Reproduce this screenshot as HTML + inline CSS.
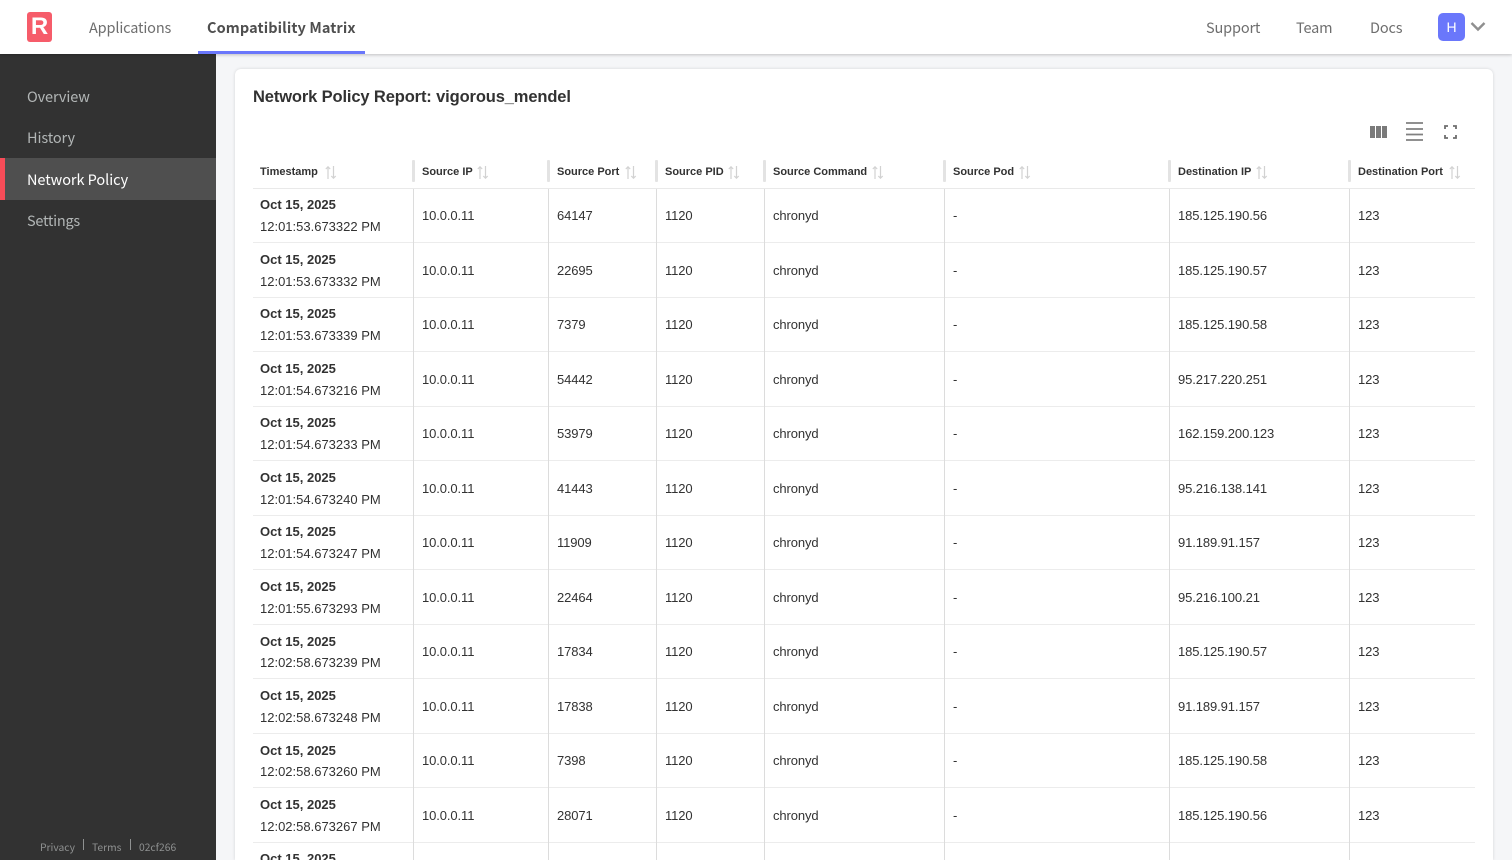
<!DOCTYPE html>
<html lang="en"><head><meta charset="utf-8"><title>Network Policy Report</title>
<style>
*{box-sizing:border-box}
html,body{margin:0;padding:0;width:1512px;height:860px;overflow:hidden;background:#f5f6f8;font-family:"Liberation Sans",sans-serif;color:#323232}
#root{position:relative;width:1512px;height:860px;overflow:hidden}
.abs{position:absolute;white-space:nowrap}
header{position:absolute;left:0;top:0;width:1512px;height:54px;background:#fff;box-shadow:0 1px 3px rgba(0,0,0,.22);z-index:3}
.nav{position:absolute;top:18px;line-height:20px;font-size:14.5px;letter-spacing:-.15px;color:#6e6e6e;font-family:"Noto Sans CJK JP","Liberation Sans",sans-serif;white-space:nowrap}
.logo{position:absolute;left:27px;top:12px;width:25px;height:30px;border-radius:3px;background:#f65c6a;color:#fff;font:bold 24px/30px "Liberation Sans",sans-serif;text-align:center}
.tabline{position:absolute;left:198px;top:51px;width:167px;height:3px;background:#6a77fb}
.avatar{position:absolute;left:1438px;top:13px;width:27px;height:28px;border-radius:5px;background:#6a77fb;color:#fff;font-size:14px;line-height:28px;text-align:center}
aside{position:absolute;left:0;top:54px;width:216px;height:806px;background:#323232;z-index:1}
.side{position:absolute;left:0;width:216px;height:41.5px;padding-left:27px;line-height:41px;font-size:14.5px;letter-spacing:-.1px;color:#b2b6b6;font-family:"Noto Sans CJK JP","Liberation Sans",sans-serif}
.side.on{background:#4f4f4f;color:#fff;border-left:5px solid #f74c58;padding-left:22px;height:42px;line-height:43px;letter-spacing:-.05px}
.foot{position:absolute;top:786px;font-size:10.3px;line-height:14px;color:#8f9191;font-family:"Noto Sans CJK JP","Liberation Sans",sans-serif}
.fsep{position:absolute;top:785px;width:1px;height:11px;background:#8f9191}
.card{position:absolute;left:235px;top:69px;width:1258px;height:791px;background:#fff;border-radius:6px 6px 0 0;box-shadow:0 0 3px rgba(0,0,0,.14)}
h1{position:absolute;left:253px;top:87px;margin:0;font-size:16.5px;letter-spacing:-.13px;line-height:21px;font-weight:bold;color:#323232;white-space:nowrap}
.hd{position:absolute;left:253px;top:155px;width:1222px;height:34px;border-bottom:1px solid #e9e9e9}
.th{position:absolute;top:10px;font-size:11px;line-height:14px;font-weight:bold;color:#323232;white-space:nowrap}
.sort{position:absolute;top:11px}
.grip{position:absolute;top:5px;width:3px;height:22px;background:#e3e3e3;border-radius:1px}
.row{position:absolute;left:253px;width:1222px;height:54.5px;border-bottom:1px solid #ececec;font-size:13px;color:#323232}
.row span{position:absolute;top:.5px;height:53px;line-height:53px;white-space:nowrap;letter-spacing:-.1px}
.row b{position:absolute;left:7px;top:6.5px;line-height:20px;font-size:13px;white-space:nowrap}
.row i{position:absolute;left:7px;top:28.5px;font-style:normal;line-height:20px;white-space:nowrap}
.c1{left:169px}.c2{left:304px}.c3{left:412px}.c4{left:520px}.c5{left:700px}.c6{left:925px}.c7{left:1105px}
.vl{position:absolute;top:189px;width:1px;height:671px;background:#dcdcdc}
</style></head><body><div id="root">
<header>
<div class="logo">R</div>
<div class="nav" style="left:89px">Applications</div>
<div class="nav" style="left:207px;font-weight:700;letter-spacing:.1px;color:#4f4f4f">Compatibility Matrix</div>
<div class="tabline"></div>
<div class="nav" style="left:1206px">Support</div>
<div class="nav" style="left:1296px">Team</div>
<div class="nav" style="left:1370px">Docs</div>
<div class="avatar">H</div>
<svg class="abs" style="left:1470px;top:21px" width="16" height="11" viewBox="0 0 16 11"><path d="M1.5 2 L8 8.5 L14.5 2" fill="none" stroke="#8f8f8f" stroke-width="2.4"/></svg>
</header>
<aside>
<div class="side" style="top:22px">Overview</div>
<div class="side" style="top:63px">History</div>
<div class="side on" style="top:104px">Network Policy</div>
<div class="side" style="top:146px;letter-spacing:-.25px">Settings</div>
<div class="foot" style="left:40px">Privacy</div>
<div class="fsep" style="left:83px"></div>
<div class="foot" style="left:92px">Terms</div>
<div class="fsep" style="left:130px"></div>
<div class="foot" style="left:139px">02cf266</div>
</aside>
<div class="card"></div>
<h1>Network Policy Report: vigorous_mendel</h1>
<svg class="abs" style="left:1370px;top:126px" width="17" height="12" viewBox="0 0 17 12"><path d="M0 0h5v12H0zM6 0h5v12H6zM12 0h5v12h-5z" fill="#7a7a7a"/></svg>
<svg class="abs" style="left:1406px;top:122px" width="17" height="19" viewBox="0 0 17 19"><path d="M0 1h17M0 7h17M0 12.500h17M0 18h17" stroke="#808080" stroke-width="1.700" fill="none"/></svg>
<svg class="abs" style="left:1444px;top:125px" width="13" height="14" viewBox="0 0 13 14"><path d="M1 4V1h3M9 1h3v3M12 10v3H9M4 13H1v-3" stroke="#6e6e6e" stroke-width="1.800" fill="none"/></svg>
<div class="hd">
<div class="th" style="left:7px">Timestamp</div>
<div class="grip" style="left:159px"></div>
<div class="th" style="left:169px">Source IP</div>
<div class="grip" style="left:294px"></div>
<div class="th" style="left:304px">Source Port</div>
<div class="grip" style="left:402px"></div>
<div class="th" style="left:412px">Source PID</div>
<div class="grip" style="left:510px"></div>
<div class="th" style="left:520px">Source Command</div>
<div class="grip" style="left:690px"></div>
<div class="th" style="left:700px">Source Pod</div>
<div class="grip" style="left:915px"></div>
<div class="th" style="left:925px">Destination IP</div>
<div class="grip" style="left:1095px"></div>
<div class="th" style="left:1105px">Destination Port</div>
<svg class="sort" style="left:72px" width="12" height="13" viewBox="0 0 12 13"><path d="M3 13V1M.8 3 3 .8 5.200 3M8.500 0v12M6.300 10l2.200 2.200L10.700 10" stroke="#d2d2d2" stroke-width="1.200" fill="none"/></svg>
<svg class="sort" style="left:224px" width="12" height="13" viewBox="0 0 12 13"><path d="M3 13V1M.8 3 3 .8 5.200 3M8.500 0v12M6.300 10l2.200 2.200L10.700 10" stroke="#d2d2d2" stroke-width="1.200" fill="none"/></svg>
<svg class="sort" style="left:372px" width="12" height="13" viewBox="0 0 12 13"><path d="M3 13V1M.8 3 3 .8 5.200 3M8.500 0v12M6.300 10l2.200 2.200L10.700 10" stroke="#d2d2d2" stroke-width="1.200" fill="none"/></svg>
<svg class="sort" style="left:475px" width="12" height="13" viewBox="0 0 12 13"><path d="M3 13V1M.8 3 3 .8 5.200 3M8.500 0v12M6.300 10l2.200 2.200L10.700 10" stroke="#d2d2d2" stroke-width="1.200" fill="none"/></svg>
<svg class="sort" style="left:619px" width="12" height="13" viewBox="0 0 12 13"><path d="M3 13V1M.8 3 3 .8 5.200 3M8.500 0v12M6.300 10l2.200 2.200L10.700 10" stroke="#d2d2d2" stroke-width="1.200" fill="none"/></svg>
<svg class="sort" style="left:766px" width="12" height="13" viewBox="0 0 12 13"><path d="M3 13V1M.8 3 3 .8 5.200 3M8.500 0v12M6.300 10l2.200 2.200L10.700 10" stroke="#d2d2d2" stroke-width="1.200" fill="none"/></svg>
<svg class="sort" style="left:1003px" width="12" height="13" viewBox="0 0 12 13"><path d="M3 13V1M.8 3 3 .8 5.200 3M8.500 0v12M6.300 10l2.200 2.200L10.700 10" stroke="#d2d2d2" stroke-width="1.200" fill="none"/></svg>
<svg class="sort" style="left:1196px" width="12" height="13" viewBox="0 0 12 13"><path d="M3 13V1M.8 3 3 .8 5.200 3M8.500 0v12M6.300 10l2.200 2.200L10.700 10" stroke="#d2d2d2" stroke-width="1.200" fill="none"/></svg>
</div>
<div class="row" style="top:188.500px"><b>Oct 15, 2025</b><i>12:01:53.673322 PM</i><span class="c1">10.0.0.11</span><span class="c2">64147</span><span class="c3">1120</span><span class="c4">chronyd</span><span class="c5">-</span><span class="c6">185.125.190.56</span><span class="c7">123</span></div>
<div class="row" style="top:243px"><b>Oct 15, 2025</b><i>12:01:53.673332 PM</i><span class="c1">10.0.0.11</span><span class="c2">22695</span><span class="c3">1120</span><span class="c4">chronyd</span><span class="c5">-</span><span class="c6">185.125.190.57</span><span class="c7">123</span></div>
<div class="row" style="top:297.500px"><b>Oct 15, 2025</b><i>12:01:53.673339 PM</i><span class="c1">10.0.0.11</span><span class="c2">7379</span><span class="c3">1120</span><span class="c4">chronyd</span><span class="c5">-</span><span class="c6">185.125.190.58</span><span class="c7">123</span></div>
<div class="row" style="top:352px"><b>Oct 15, 2025</b><i>12:01:54.673216 PM</i><span class="c1">10.0.0.11</span><span class="c2">54442</span><span class="c3">1120</span><span class="c4">chronyd</span><span class="c5">-</span><span class="c6">95.217.220.251</span><span class="c7">123</span></div>
<div class="row" style="top:406.500px"><b>Oct 15, 2025</b><i>12:01:54.673233 PM</i><span class="c1">10.0.0.11</span><span class="c2">53979</span><span class="c3">1120</span><span class="c4">chronyd</span><span class="c5">-</span><span class="c6">162.159.200.123</span><span class="c7">123</span></div>
<div class="row" style="top:461px"><b>Oct 15, 2025</b><i>12:01:54.673240 PM</i><span class="c1">10.0.0.11</span><span class="c2">41443</span><span class="c3">1120</span><span class="c4">chronyd</span><span class="c5">-</span><span class="c6">95.216.138.141</span><span class="c7">123</span></div>
<div class="row" style="top:515.500px"><b>Oct 15, 2025</b><i>12:01:54.673247 PM</i><span class="c1">10.0.0.11</span><span class="c2">11909</span><span class="c3">1120</span><span class="c4">chronyd</span><span class="c5">-</span><span class="c6">91.189.91.157</span><span class="c7">123</span></div>
<div class="row" style="top:570px"><b>Oct 15, 2025</b><i>12:01:55.673293 PM</i><span class="c1">10.0.0.11</span><span class="c2">22464</span><span class="c3">1120</span><span class="c4">chronyd</span><span class="c5">-</span><span class="c6">95.216.100.21</span><span class="c7">123</span></div>
<div class="row" style="top:624.500px"><b style="top:7.500px">Oct 15, 2025</b><i>12:02:58.673239 PM</i><span class="c1">10.0.0.11</span><span class="c2">17834</span><span class="c3">1120</span><span class="c4">chronyd</span><span class="c5">-</span><span class="c6">185.125.190.57</span><span class="c7">123</span></div>
<div class="row" style="top:679px"><b>Oct 15, 2025</b><i>12:02:58.673248 PM</i><span class="c1">10.0.0.11</span><span class="c2">17838</span><span class="c3">1120</span><span class="c4">chronyd</span><span class="c5">-</span><span class="c6">91.189.91.157</span><span class="c7">123</span></div>
<div class="row" style="top:733.500px"><b style="top:7.500px">Oct 15, 2025</b><i>12:02:58.673260 PM</i><span class="c1">10.0.0.11</span><span class="c2">7398</span><span class="c3">1120</span><span class="c4">chronyd</span><span class="c5">-</span><span class="c6">185.125.190.58</span><span class="c7">123</span></div>
<div class="row" style="top:788px"><b>Oct 15, 2025</b><i>12:02:58.673267 PM</i><span class="c1">10.0.0.11</span><span class="c2">28071</span><span class="c3">1120</span><span class="c4">chronyd</span><span class="c5">-</span><span class="c6">185.125.190.56</span><span class="c7">123</span></div>
<div class="row" style="top:842.500px;height:17.500px;border:0;overflow:hidden"><b>Oct 15, 2025</b></div>
<div class="vl" style="left:413px"></div><div class="vl" style="left:548px"></div><div class="vl" style="left:656px"></div><div class="vl" style="left:764px"></div><div class="vl" style="left:944px"></div><div class="vl" style="left:1169px"></div><div class="vl" style="left:1349px"></div>
</div></body></html>
